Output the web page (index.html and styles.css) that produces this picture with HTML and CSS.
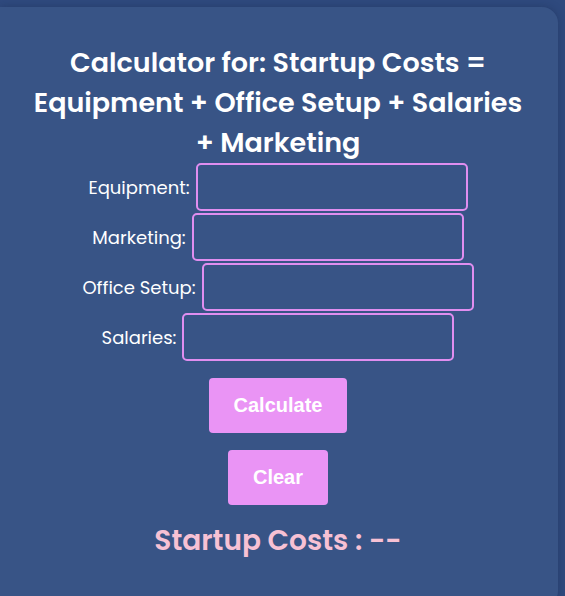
FILE: index.html
```html
<!DOCTYPE html>
<html lang="en">
<head>
  <meta charset="UTF-8" />
  <meta name="viewport" content="width=device-width, initial-scale=1.0"/>
  <title>Startup Costs Calculator</title>
  <link rel="stylesheet" href="styles.css">
</head>
<body>
  <div class="card">
    <h1>Calculator for: Startup Costs = Equipment + Office Setup + Salaries + Marketing</h1>

    <div class="row">
      <label for="equipment">Equipment:</label>
      <input type="number" id="equipment" />
    </div>
    <div class="row">
      <label for="marketing">Marketing:</label>
      <input type="number" id="marketing" />
    </div>
    <div class="row">
      <label for="office">Office Setup:</label>
      <input type="number" id="office" />
    </div>
    <div class="row">
      <label for="salaries">Salaries:</label>
      <input type="number" id="salaries" />
    </div>

    <div class="actions">
      <button id="calc" class="btn">Calculate</button>
      <button id="clear" class="btn">Clear</button>
    </div>

    <div class="result">Startup Costs : <span id="total">--</span></div>
  </div>

  <script>
    const ids = ['equipment', 'marketing', 'office', 'salaries'];

    document.getElementById('calc').onclick = function () {
      let sum = 0;
      ids.forEach(id => {
        sum += parseFloat(document.getElementById(id).value) || 0;
      });
      document.getElementById('total').textContent = sum.toFixed(2);
    };

    document.getElementById('clear').onclick = function () {
      ids.forEach(id => {
        document.getElementById(id).value = '';
      });
      document.getElementById('total').textContent = '--';
    };
  </script>
</body>
</html>
```

FILE: styles.css
```css
body {
  margin: 0;
  font-family: 'Poppins', 'Open Sans', sans-serif;
  background: #2f4a7e;
  color: #fff;
  overflow: hidden;
}

.card {
  margin-top: 7px;
  width: 558px;
  min-height: 600px;
  background: #385486;
  border-radius: 0 16px 16px 0;
  box-shadow: 0 0 8px rgba(20, 35, 70, 0.35);
  padding: 36px 2px 0 0;
  box-sizing: border-box;
  text-align: center;
}

h1 {
  max-width: 500px;
  margin: 0 auto;
  font-size: 27px;
  line-height: 40px;
  font-weight: 600;
}

.row {
  display: flex;
  justify-content: center;
  align-items: center;
  gap: 6px;
  margin-bottom: 2px;
}

label {
  font-size: 18px;
}

input {
  width: 272px;
  height: 48px;
  box-sizing: border-box;
  background: transparent;
  border: 2px solid #e08ef0;
  border-radius: 5px;
  color: #fff;
  font-size: 16px;
  padding: 0 10px;
}

.actions {
  display: flex;
  flex-direction: column;
  align-items: center;
  gap: 17px;
  margin-top: 17px;
}

.btn {
  background: #ea94f5;
  color: #fff;
  border: none;
  border-radius: 4px;
  font-family: 'Liberation Sans', Arial, sans-serif;
  font-weight: bold;
  font-size: 20px;
  height: 55px;
  padding: 0 25px;
  cursor: pointer;
}

.result {
  margin-top: 15px;
  font-size: 28px;
  font-weight: 600;
  color: #f7c1d4;
}
```
